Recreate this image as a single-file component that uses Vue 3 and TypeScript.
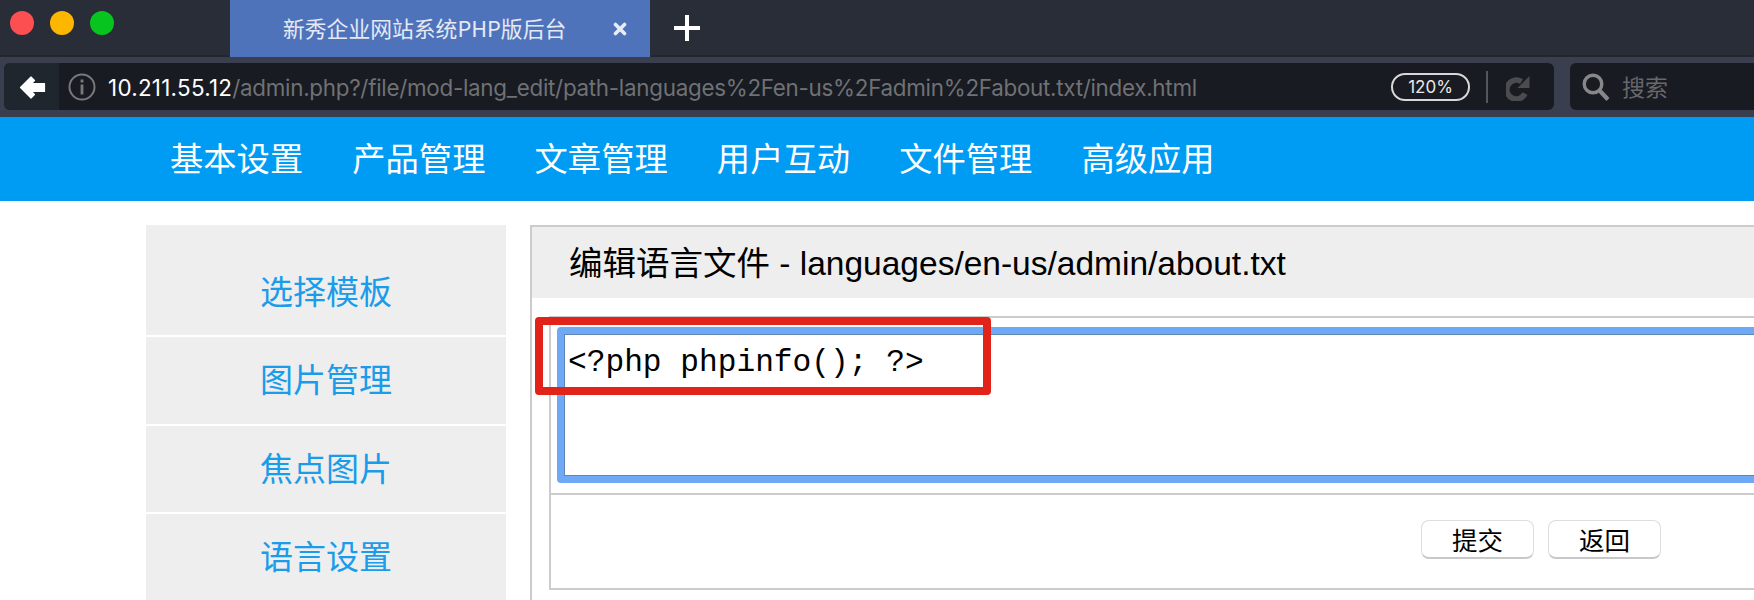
<script setup lang="ts">
const navItems: string[] = ['基本设置', '产品管理', '文章管理', '用户互动', '文件管理', '高级应用']
const sideItems: { label: string; cls: string }[] = [
  { label: '选择模板', cls: 'first' },
  { label: '图片管理', cls: 'second' },
  { label: '焦点图片', cls: 'third' },
  { label: '语言设置', cls: 'fourth' },
]
</script>

<template>
  <div class="page">
    <header class="titlebar">
      <div class="lights">
        <span class="light red"></span>
        <span class="light yellow"></span>
        <span class="light green"></span>
      </div>
      <div class="tab">
        <span class="tab-title">新秀企业网站系统PHP版后台</span>
        <svg class="tab-close" width="14" height="14" viewBox="0 0 14 14">
          <path d="M2.5 2.5 L11.5 11.5 M11.5 2.5 L2.5 11.5" stroke="#e8ecf6" stroke-width="3.6" stroke-linecap="round" />
        </svg>
      </div>
      <svg class="tab-plus" width="26" height="26" viewBox="0 0 26 26">
        <path d="M13 0 V26 M0 13 H26" stroke="#fff" stroke-width="4" />
      </svg>
    </header>

    <div class="toolbar">
      <div class="address">
        <div class="back">
          <svg width="28" height="28" viewBox="0 0 28 28">
            <path d="M2.5 14.5 L13 4 L16.5 7.5 L13.5 10.5 L26.5 10.5 L26.5 18.5 L13.5 18.5 L16.5 21.5 L13 25 Z" fill="#fff" stroke="#fff" stroke-width="1.2" stroke-linejoin="round" />
          </svg>
        </div>
        <svg class="info" width="28" height="28" viewBox="0 0 28 28">
          <circle cx="14" cy="14" r="12.5" fill="none" stroke="#77797d" stroke-width="2" />
          <rect x="12.6" y="11.5" width="2.8" height="10" fill="#77797d" />
          <rect x="12.6" y="6.5" width="2.8" height="3" fill="#77797d" />
        </svg>
        <span class="url"><span class="host">10.211.55.12</span>/admin.php?/file/mod-lang_edit/path-languages%2Fen-us%2Fadmin%2Fabout.txt/index.html</span>
        <span class="zoom-pill">120%</span>
        <span class="divider"></span>
        <svg class="reload" width="26" height="28" viewBox="0 0 26 28">
          <path d="M19 20.5 A9.5 9.5 0 1 1 15.5 8.6" fill="none" stroke="#4a4c4f" stroke-width="5.5" />
          <path d="M23.5 3 V15 H11.5 Z" fill="#4a4c4f" />
        </svg>
      </div>
      <div class="search">
        <svg width="30" height="30" viewBox="0 0 30 30">
          <circle cx="12" cy="12" r="8.8" fill="none" stroke="#85878a" stroke-width="3.4" />
          <path d="M18.5 18.5 L27 27.5" stroke="#85878a" stroke-width="4.2" />
        </svg>
        <span class="search-text">搜索</span>
      </div>
    </div>

    <nav class="nav">
      <a v-for="item in navItems" :key="item" class="nav-item">{{ item }}</a>
    </nav>

    <div class="content">
      <aside class="side">
        <a v-for="item in sideItems" :key="item.label" class="side-item" :class="item.cls">{{ item.label }}</a>
      </aside>

      <main class="panel">
        <h2 class="panel-title">编辑语言文件 - languages/en-us/admin/about.txt</h2>
        <div class="panel-body">
          <div class="form">
            <div class="form-row editor-row">
              <div class="editor">&lt;?php phpinfo(); ?&gt;</div>
            </div>
            <div class="form-row action-row">
              <button class="btn" type="button">提交</button>
              <button class="btn" type="button">返回</button>
            </div>
            <div class="highlight"></div>
          </div>
        </div>
      </main>
    </div>
  </div>
</template>

<style>
html,
body {
  margin: 0;
  background: #fff;
  overflow: hidden;
}
</style>

<style scoped>
.page {
  width: 1754px;
  height: 600px;
  overflow: hidden;
  display: flex;
  flex-direction: column;
  font-family: "Liberation Sans", "Noto Sans CJK SC", sans-serif;
}

.titlebar {
  height: 57px;
  flex: none;
  box-sizing: border-box;
  background: #292d38;
  border-bottom: 2px solid #23262f;
  display: flex;
  align-items: flex-start;
  padding-left: 10px;
}
.lights {
  display: flex;
  gap: 16px;
  width: 220px;
  padding-top: 11px;
}
.light {
  width: 24px;
  height: 24px;
  border-radius: 50%;
}
.red { background: #fc4f52; }
.yellow { background: #fdb700; }
.green { background: #07c41f; }

.tab {
  width: 420px;
  height: 57px;
  flex: none;
  background: #4f73bb;
  display: flex;
  align-items: center;
  padding-left: 53px;
  box-sizing: border-box;
}
.tab-title {
  font-family: "Noto Sans CJK SC", "Liberation Sans", sans-serif;
  font-size: 21.8px;
  color: #e4e9f4;
  width: 283px;
  white-space: nowrap;
  padding-bottom: 2px;
}
.tab-close {
  margin-left: 47px;
}
.tab-plus {
  margin: 15px 0 0 24px;
}

.toolbar {
  height: 60px;
  flex: none;
  box-sizing: border-box;
  background: #3a3f50;
  display: flex;
  padding: 6px 0 6px 4px;
  gap: 16px;
}
.address {
  width: 1550px;
  height: 47px;
  flex: none;
  background: #181b21;
  border-radius: 6px;
  display: flex;
  align-items: center;
  overflow: hidden;
}
.back {
  width: 55px;
  height: 100%;
  background: #1f262e;
  display: flex;
  align-items: center;
  justify-content: center;
  flex: none;
}
.info {
  margin-left: 9px;
  flex: none;
}
.url {
  margin-left: 12px;
  width: 1283px;
  flex: none;
  font-family: Inter, "Liberation Sans", sans-serif;
  font-size: 22.4px;
  letter-spacing: -0.28px;
  color: #6f7175;
  white-space: nowrap;
  padding-top: 2px;
}
.host {
  color: #fff;
  letter-spacing: 0.27px;
}
.zoom-pill {
  box-sizing: border-box;
  width: 79px;
  height: 28px;
  flex: none;
  border: 2px solid #d8d8d8;
  border-radius: 14px;
  color: #e8e8e8;
  font-family: Inter, "Liberation Sans", sans-serif;
  font-size: 17px;
  text-align: center;
  line-height: 24px;
}
.divider {
  width: 2px;
  height: 32px;
  background: #55575b;
  margin-left: 16px;
  flex: none;
}
.reload {
  margin-left: 18px;
  flex: none;
}
.search {
  flex: 1;
  height: 47px;
  background: #181b21;
  border-radius: 6px 0 0 6px;
  display: flex;
  align-items: center;
  padding-left: 11px;
}
.search-text {
  margin-left: 11px;
  font-family: "Noto Sans CJK SC", sans-serif;
  font-size: 23px;
  color: #66686c;
  padding-bottom: 2px;
}

.nav {
  height: 84px;
  flex: none;
  box-sizing: border-box;
  background: #009bf3;
  display: flex;
  align-items: center;
  gap: 49.1px;
  padding: 0 0 5px 170px;
}
.nav-item {
  font-family: "Noto Sans CJK SC", sans-serif;
  font-size: 33.3px;
  color: #fff;
}

.content {
  flex: 1;
  display: flex;
  padding: 24px 0 0 146px;
  gap: 24px;
  min-height: 0;
}
.side {
  width: 360px;
  flex: none;
  display: flex;
  flex-direction: column;
  gap: 2px;
}
.side-item {
  background: #eee;
  color: #1a9cea;
  font-family: "Noto Sans CJK SC", sans-serif;
  font-size: 33px;
  text-align: center;
  display: flex;
  align-items: center;
  justify-content: center;
  flex: none;
  box-sizing: border-box;
  padding-bottom: 5px;
}
.first { height: 110px; padding: 19px 0 0; }
.second { height: 87px; }
.third { height: 86px; }
.fourth { height: 86px; }

.panel {
  flex: 1;
  min-width: 0;
  box-sizing: border-box;
  border-left: 2px solid #ccc;
  border-top: 2px solid #ccc;
  height: 375px;
}
.panel-title {
  margin: 0;
  height: 71px;
  box-sizing: border-box;
  background: #eee;
  padding: 0 0 5px 37px;
  display: flex;
  align-items: center;
  font-weight: normal;
  font-size: 33.5px;
  color: #000;
  white-space: nowrap;
}
.panel-body {
  padding: 18px 0 0 17px;
}
.form {
  position: relative;
  box-sizing: border-box;
  border: 2px solid #ccc;
  height: 274px;
  width: calc(100% + 4px);
}
.form-row {
  box-sizing: border-box;
}
.editor-row {
  height: 177px;
  padding: 9px 0 0 6px;
  border-bottom: 2px solid #ccc;
  overflow: hidden;
}
.editor {
  box-sizing: border-box;
  height: 156px;
  width: calc(100% + 20px);
  border: 7px solid #6fa9f5;
  border-radius: 4px;
  outline: 1px solid #5d86b3;
  outline-offset: -8px;
  padding: 9px 0 0 4px;
  font-family: "Liberation Mono", monospace;
  font-size: 31.2px;
  line-height: 40px;
  color: #000;
  background: #fff;
  white-space: pre;
}
.action-row {
  display: flex;
  gap: 14px;
  padding: 25px 0 0 870px;
}
.btn {
  width: 113px;
  height: 39px;
  box-sizing: border-box;
  padding: 0;
  background: #fff;
  border: 1px solid #ddd;
  border-bottom: 2px solid #c8c8c8;
  border-radius: 8px;
  font-family: "Noto Sans CJK SC", sans-serif;
  font-size: 25.5px;
  line-height: 34px;
  color: #000;
}
.highlight {
  position: absolute;
  left: -16px;
  top: -1px;
  width: 456px;
  height: 78px;
  box-sizing: border-box;
  border: 8px solid #e2231a;
  border-radius: 4px;
  pointer-events: none;
}
</style>
